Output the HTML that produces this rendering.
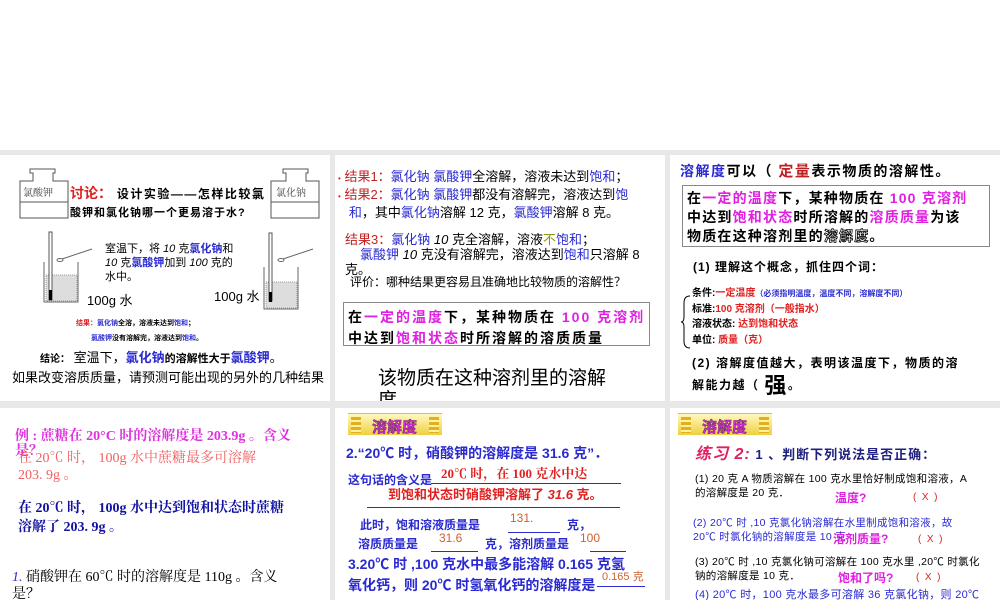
<!DOCTYPE html>
<html><head><meta charset="utf-8"><style>
*{margin:0;padding:0;box-sizing:border-box}
body{width:1000px;height:600px;background:#e8e8e8;position:relative;overflow:hidden;font-family:"Liberation Sans","Noto Sans CJK SC",sans-serif;color:#000}
.top{position:absolute;left:0;top:0;width:1000px;height:150px;background:#fff}
.s{position:absolute;background:#fff;overflow:hidden}
.t{position:absolute;white-space:nowrap;line-height:1}
.b{font-weight:bold}
.r{color:#e02020}.bl{color:#2a2ad0}.m{color:#e020e0}.dr{color:#c02020}
.sf{font-family:"Liberation Serif","Noto Serif CJK SC",serif}
.banner{position:absolute;width:94px;height:22px;background:linear-gradient(#fff8c0,#f0d040);border-top:1px solid #e0c040}
.banner span{position:absolute;left:24px;top:2px;font-size:15px;font-weight:bold;color:#d030d0;-webkit-text-stroke:0.5px #702070}
.bars{position:absolute;top:3px;width:10px;height:16px;background:repeating-linear-gradient(#e0b020 0 3px,#fff0a0 3px 5px)}
</style></head><body>
<div class="top"></div>

<!-- Slide 1 -->
<div class="s" style="left:0;top:155px;width:330px;height:246px">
<svg width="330" height="246" style="position:absolute;left:0;top:0">
<g fill="#fff" stroke="#555" stroke-width="1">
<path d="M30 14 h25 v4 h-2 v8 h15 v37 h-48 v-37 h13 v-8 h-3z"/>
<path d="M283 14 h25 v4 h-2 v8 h13 v37 h-48 v-37 h15 v-8 h-3z"/>
</g>
<line x1="20" y1="47" x2="68" y2="47" stroke="#555"/><line x1="271" y1="47" x2="319" y2="47" stroke="#555"/>
<rect x="46" y="120" width="31" height="26" fill="#ddd" stroke="#999" stroke-dasharray="1 1"/>
<path d="M44 107 v40 h34 v-40" fill="none" stroke="#666"/>
<rect x="49" y="77" width="3" height="68" fill="#fff" stroke="#555"/><rect x="49" y="135" width="3" height="10" fill="#000"/>
<rect x="266" y="127" width="31" height="26" fill="#ddd" stroke="#999" stroke-dasharray="1 1"/>
<path d="M264 112 v42 h34 v-42" fill="none" stroke="#666"/>
<rect x="269" y="78" width="3" height="68" fill="#fff" stroke="#555"/><rect x="269" y="137" width="3" height="10" fill="#000"/>
<line x1="62" y1="104" x2="92" y2="94" stroke="#666"/><ellipse cx="60" cy="105" rx="3" ry="1.5" fill="none" stroke="#666"/>
<line x1="283" y1="104" x2="313" y2="94" stroke="#666"/><ellipse cx="281" cy="105" rx="3" ry="1.5" fill="none" stroke="#666"/>
</svg>
<div class="t sf" style="left:23px;top:34px;font-size:10px;color:#444">氯酸钾</div>
<div class="t sf" style="left:276px;top:34px;font-size:10px;color:#444">氯化钠</div>
<div class="t b" style="left:70px;top:31px;font-size:12px;letter-spacing:1.5px"><span class="r" style="font-size:14px;letter-spacing:0">讨论：</span> 设计实验——怎样比较氯</div>
<div class="t b" style="left:70px;top:53px;font-size:11px;letter-spacing:1px">酸钾和氯化钠哪一个更易溶于水?</div>
<div class="t" style="left:105px;top:87px;font-size:11px;line-height:14px">室温下，将 <i>10</i> 克<b class="bl">氯化钠</b>和<br><i>10</i> 克<b class="bl">氯酸钾</b>加到 <i>100</i> 克的<br>水中。</div>
<div class="t" style="left:87px;top:139px;font-size:13px">100g 水</div>
<div class="t" style="left:214px;top:135px;font-size:13px">100g 水</div>
<div class="t b" style="left:76px;top:165px;font-size:7px"><span class="r">结果：</span><span class="bl">氯化钠</span>全溶，溶液未达到<span class="bl">饱和</span>；</div>
<div class="t b" style="left:91px;top:180px;font-size:7px"><span class="bl">氯酸钾</span>没有溶解完，溶液达到<span class="bl">饱和</span>。</div>
<div class="t" style="left:40px;top:196px;font-size:13px"><b style="font-size:10px">结论：</b> 室温下，<b class="bl">氯化钠</b><b style="font-size:11px">的溶解性大于</b><b class="bl">氯酸钾</b>。</div>
<div class="t" style="left:12px;top:216px;font-size:13px">如果改变溶质质量，请预测可能出现的另外的几种结果</div>
</div>

<!-- Slide 2 -->
<div class="s" style="left:335px;top:155px;width:330px;height:246px">
<div class="t" style="left:3px;top:14px;font-size:13px;line-height:16px"><span class="r" style="font-size:8px">•</span> <span class="dr">结果1：</span><span class="bl">氯化钠 氯酸钾</span>全溶解，溶液未达到<span class="bl">饱和</span>；</div>
<div class="t" style="left:3px;top:32px;font-size:13px;line-height:16px"><span class="r" style="font-size:8px">•</span> <span class="dr">结果2：</span><span class="bl">氯化钠 氯酸钾</span>都没有溶解完，溶液达到<span class="bl">饱</span><br>&nbsp;&nbsp;&nbsp;<span class="bl">和</span>，其中<span class="bl">氯化钠</span>溶解 12 克，<span class="bl">氯酸钾</span>溶解 8 克。</div>
<div class="t" style="left:10px;top:78px;font-size:13px"><span class="dr">结果3：</span><span class="bl">氯化钠</span> <i>10</i> 克全溶解，溶液<span style="color:#8a9a10">不</span><span class="bl">饱和</span>；</div>
<div class="t" style="left:25px;top:93px;font-size:13px"><span class="bl">氯酸钾</span> <i>10</i> 克没有溶解完，溶液达到<span class="bl">饱和</span>只溶解 8</div>
<div class="t" style="left:10px;top:108px;font-size:13px">克。</div>
<div class="t" style="left:15px;top:121px;font-size:12px">评价：哪种结果更容易且准确地比较物质的溶解性？</div>
<div style="position:absolute;left:8px;top:147px;width:307px;height:44px;border:1px solid #888"></div>
<div class="t b" style="left:13px;top:152px;font-size:14px;line-height:21px;letter-spacing:2px">在<span class="m">一定的温度</span>下，某种物质在 <span class="m">100 克溶剂</span><br>中达到<span class="m">饱和状态</span>时所溶解的溶质质量</div>
<div class="t" style="left:43px;top:213px;font-size:19px;line-height:22px">该物质在这种溶剂里的溶解<br>度。</div>
</div>

<!-- Slide 3 -->
<div class="s" style="left:670px;top:155px;width:330px;height:246px">
<div class="t b" style="left:10px;top:9px;font-size:14px;letter-spacing:1.5px"><span class="bl">溶解度</span>可以（ <span class="dr" style="font-size:15px">定量</span>表示物质的溶解性。</div>
<div style="position:absolute;left:12px;top:30px;width:308px;height:62px;border:1px solid #888"></div>
<div class="t b" style="left:17px;top:34px;font-size:14px;line-height:19px;letter-spacing:1.2px">在<span class="m">一定的温度</span>下，某种物质在 <span class="m">100 克溶剂</span><br>中达到<span class="m">饱和状态</span>时所溶解的<span class="m">溶质质量</span>为该<br>物质在这种溶剂里的<span style="color:#fff;-webkit-text-stroke:0.8px #000">溶解度</span>。</div>
<div class="t b" style="left:23px;top:106px;font-size:12px;letter-spacing:1px">(1) 理解这个概念，抓住四个词：</div>
<svg width="12" height="54" style="position:absolute;left:10px;top:140px"><path d="M10 1 Q4 1 4 8 V22 Q4 27 1 27 Q4 27 4 32 V46 Q4 53 10 53" fill="none" stroke="#000"/></svg>
<div class="t b" style="left:22px;top:131px;font-size:10px;line-height:15.5px">条件:<span class="r">一定温度</span><span class="bl" style="font-size:8px">（必须指明温度，温度不同，溶解度不同）</span><br>标准:<span class="r">100 克溶剂（一般指水）</span><br>溶液状态: <span class="r">达到饱和状态</span><br>单位: <span class="r">质量（克）</span></div>
<div class="t b" style="left:22px;top:197px;font-size:12px;line-height:22px;letter-spacing:1.5px">(2) 溶解度值越大，表明该温度下，物质的溶<br>解能力越（ <span style="font-size:22px;vertical-align:-4px">强</span>。</div>
</div>

<!-- Slide 4 -->
<div class="s sf" style="left:0;top:408px;width:330px;height:192px">
<div class="t b m" style="left:15px;top:21px;font-size:14px;line-height:15px;color:#e030e0">例 : 蔗糖在 20°C 时的溶解度是 203.9g 。含义<br>是？</div>
<div class="t" style="left:18px;top:42px;font-size:14px;line-height:17px;color:#f06060">在 20℃ 时， 100g 水中蔗糖最多可溶解<br>203. 9g 。</div>
<div class="t b" style="left:18px;top:91px;font-size:14px;line-height:19px;color:#1010a0">在 20℃ 时， 100g 水中达到饱和状态时蔗糖<br>溶解了 203. 9g 。</div>
<div class="t" style="left:12px;top:161px;font-size:14px;line-height:17px"><i class="bl">1.</i> 硝酸钾在 60℃ 时的溶解度是 110g 。含义<br>是？</div>
</div>

<!-- Slide 5 -->
<div class="s" style="left:335px;top:408px;width:330px;height:192px">
<div class="banner" style="left:13px;top:5px"><div class="bars" style="left:3px"></div><div class="bars" style="left:81px"></div><span>溶解度</span></div>
<div class="t b bl" style="left:11px;top:38px;font-size:14px">2.“20℃ 时，硝酸钾的溶解度是 31.6 克”．</div>
<div class="t b bl" style="left:13px;top:66px;font-size:12px">这句话的含义是</div>
<div class="t b r sf" style="left:106px;top:59px;font-size:13px">20℃ 时，在 100 克水中达</div>
<div style="position:absolute;left:96px;top:75px;width:190px;border-top:1px solid #2a2ad0"></div>
<div class="t b r" style="left:53px;top:80px;font-size:13px">到饱和状态时硝酸钾溶解了 <i>31.6</i> 克。</div>
<div style="position:absolute;left:32px;top:99px;width:253px;border-top:1px solid #2a2ad0"></div>
<div class="t b bl" style="left:25px;top:111px;font-size:12px">此时，饱和溶液质量是</div>
<div class="t" style="left:175px;top:104px;font-size:12px;color:#d06030">131.</div>
<div style="position:absolute;left:173px;top:124px;width:52px;border-top:1px solid #2a2ad0"></div>
<div class="t b bl" style="left:232px;top:111px;font-size:12px">克，</div>
<div class="t b bl" style="left:23px;top:130px;font-size:12px">溶质质量是</div>
<div class="t" style="left:104px;top:124px;font-size:12px;color:#d06030">31.6</div>
<div style="position:absolute;left:96px;top:143px;width:47px;border-top:1px solid #2a2ad0"></div>
<div class="t b bl" style="left:150px;top:130px;font-size:12px">克，溶剂质量是</div>
<div class="t" style="left:245px;top:124px;font-size:12px;color:#d06030">100</div>
<div style="position:absolute;left:255px;top:143px;width:36px;border-top:1px solid #2a2ad0"></div>
<div class="t b bl" style="left:13px;top:149px;font-size:14px">3.20℃ 时 ,100 克水中最多能溶解 0.165 克氢</div>
<div class="t b bl" style="left:13px;top:170px;font-size:14px">氧化钙，则 20℃ 时氢氧化钙的溶解度是</div>
<div class="t" style="left:267px;top:164px;font-size:11px;color:#d06030">0.165 克</div>
<div style="position:absolute;left:262px;top:178px;width:48px;border-top:1px solid #2a2ad0"></div>
</div>

<!-- Slide 6 -->
<div class="s" style="left:670px;top:408px;width:330px;height:192px">
<div class="banner" style="left:8px;top:5px"><div class="bars" style="left:3px"></div><div class="bars" style="left:81px"></div><span>溶解度</span></div>
<div class="t b" style="left:25px;top:39px;font-size:13px;letter-spacing:1px"><i style="color:#e02060;font-size:16px">练习 2:</i> <span style="color:#202080">1 、判断下列说法是否正确：</span></div>
<div class="t" style="left:25px;top:64px;font-size:10.5px;line-height:14px;letter-spacing:0.3px">(1) 20 克 A 物质溶解在 100 克水里恰好制成饱和溶液，A<br>的溶解度是 20 克．</div>
<div class="t b m" style="left:165px;top:84px;font-size:12px">温度?</div>
<div class="t r" style="left:243px;top:85px;font-size:10px">(&nbsp; X&nbsp; )</div>
<div class="t bl" style="left:23px;top:108px;font-size:10.5px;line-height:14px;letter-spacing:0.3px">(2) 20℃ 时 ,10 克氯化钠溶解在水里制成饱和溶液，故<br>20℃ 时氯化钠的溶解度是 10 克</div>
<div class="t b m" style="left:163px;top:125px;font-size:12px">溶剂质量?</div>
<div class="t r" style="left:248px;top:127px;font-size:10px">(&nbsp; X&nbsp; )</div>
<div class="t" style="left:25px;top:147px;font-size:10.5px;line-height:14px;letter-spacing:0.3px">(3) 20℃ 时 ,10 克氯化钠可溶解在 100 克水里 ,20℃ 时氯化<br>钠的溶解度是 10 克．</div>
<div class="t b m" style="left:168px;top:164px;font-size:12px">饱和了吗?</div>
<div class="t r" style="left:246px;top:165px;font-size:10px">(&nbsp; X&nbsp; )</div>
<div class="t bl" style="left:25px;top:182px;font-size:11px;letter-spacing:0.3px">(4) 20℃ 时，100 克水最多可溶解 36 克氯化钠，则 20℃</div>
</div>
</body></html>
